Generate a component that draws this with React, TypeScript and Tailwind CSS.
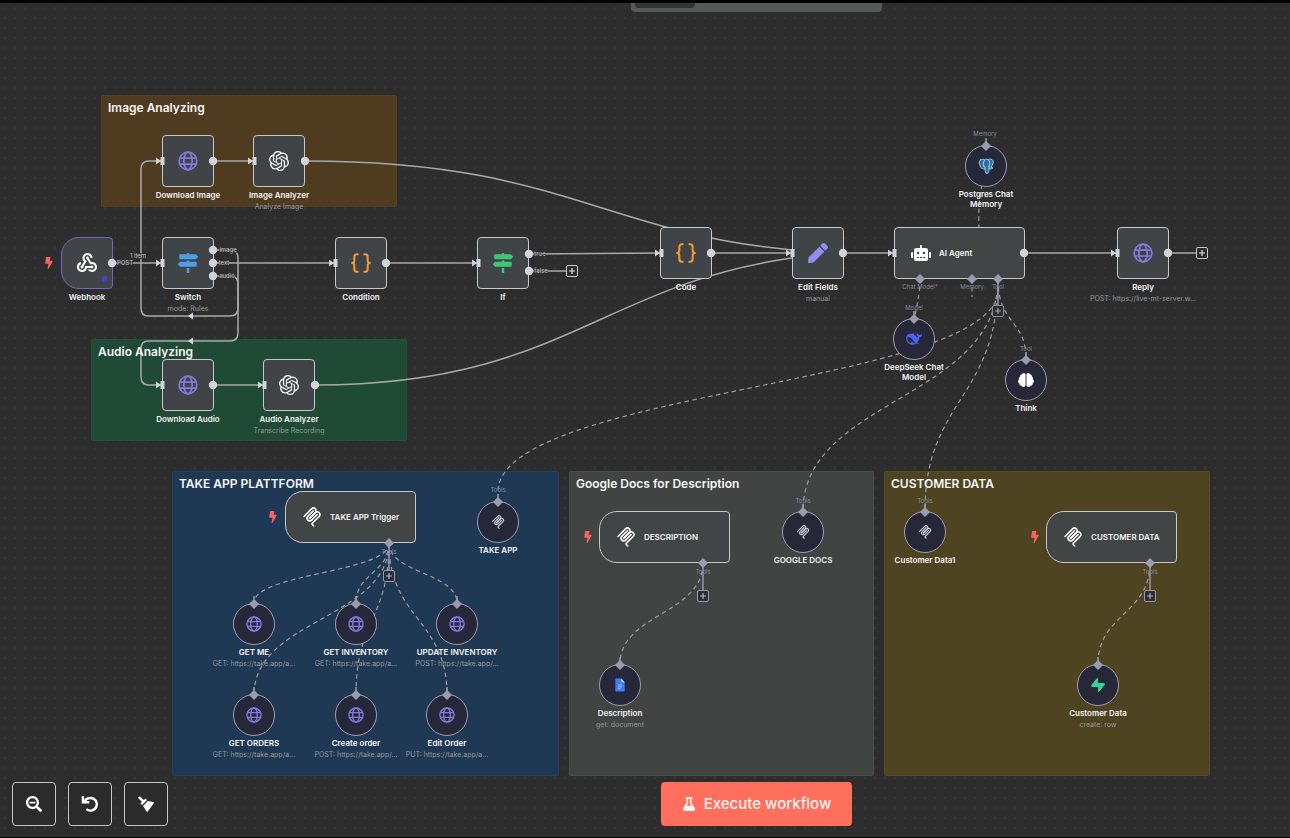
import type { CSSProperties, ReactNode } from 'react';
import { FaBolt, FaBrain, FaFlask, FaMapSigns, FaPen, FaRobot, FaSearchMinus } from 'react-icons/fa';
import { MdWebhook } from 'react-icons/md';
import { SiOpenai, SiSupabase } from 'react-icons/si';

/* ---------- icons ---------- */

function Globe({ className }: { className: string }) {
  return (
    <svg viewBox="0 0 24 24" fill="none" stroke="currentColor" strokeWidth="2.1" className={className} aria-hidden="true">
      <circle cx="12" cy="12" r="10.6" />
      <ellipse cx="12" cy="12" rx="5" ry="10.6" />
      <path d="M2.2 8.4h19.6M2.2 15.6h19.6" />
    </svg>
  );
}

function Mcp({ className }: { className: string }) {
  return (
    <svg viewBox="0 0 180 180" fill="none" stroke="currentColor" strokeWidth="14" strokeLinecap="round" className={className} aria-hidden="true">
      <path d="M18 84.85L85.88 16.97C95.25 7.6 110.45 7.6 119.82 16.97C129.2 26.34 129.2 41.54 119.82 50.91L68.56 102.18" />
      <path d="M69.27 101.47L119.82 50.91C129.2 41.54 144.39 41.54 153.77 50.91L154.12 51.27C163.49 60.64 163.49 75.83 154.12 85.21L92.72 146.6C89.6 149.72 89.6 154.79 92.72 157.91L105.33 170.52" />
      <path d="M102.85 33.94L52.65 84.15C43.28 93.52 43.28 108.71 52.65 118.09C62.02 127.46 77.22 127.46 86.59 118.09L136.79 67.88" />
    </svg>
  );
}

function Braces({ className }: { className: string }) {
  return (
    <svg viewBox="0 0 24 24" fill="none" stroke="currentColor" strokeWidth="2.4" strokeLinecap="round" strokeLinejoin="round" className={className} aria-hidden="true">
      <path d="M8 1.5H7a3 3 0 0 0-3 3v4.2c0 2-1 3.3-2.7 3.3C3 12 4 13.3 4 15.3v4.2a3 3 0 0 0 3 3h1" />
      <path d="M16 1.5h1a3 3 0 0 1 3 3v4.2c0 2 1 3.3 2.7 3.3-1.7 0-2.7 1.3-2.7 3.3v4.2a3 3 0 0 1-3 3h-1" />
    </svg>
  );
}

function Elephant({ className }: { className: string }) {
  return (
    <svg viewBox="0 0 24 24" strokeLinejoin="round" strokeLinecap="round" className={className} aria-hidden="true">
      <path
        d="M3.5 3C6 1.3 8.5 2 10 2.6C12 1.6 14 1.8 15.5 2.3C18 1 21 1.6 22.5 4C23.5 7 21.5 11 19.5 14C20.5 14.5 22 14.2 22.5 14.8C21.5 16.6 18 16.8 16.5 16C16.3 18.5 16.5 23 13.5 23C11 23 10.8 20 10.6 16.5C9.5 17 8 17 7 15.5C5 17 3.5 13 2.3 9.5C1.5 6.5 1.6 4.3 3.5 3Z"
        fill="#336f9e"
        stroke="#8fcdf0"
        strokeWidth="1.5"
      />
      <path d="M10 3C8 5 7.5 9 8.5 12M15.5 2.5C18 5 18.5 9 16.5 12.5M10.6 16C11 14 10.5 12 8.5 12M16.5 16V12.5" fill="none" stroke="#9fd6f4" strokeWidth="1.5" />
    </svg>
  );
}

function DeepSeek({ className }: { className: string }) {
  return (
    <svg viewBox="0 0 24 24" fill="currentColor" fillRule="evenodd" className={className} aria-hidden="true">
      <path d="M23.748 4.482c-.254-.124-.364.113-.512.234-.051.039-.094.09-.137.136-.372.397-.806.657-1.373.626-.829-.046-1.537.214-2.163.848-.133-.782-.575-1.248-1.247-1.548-.352-.156-.708-.311-.955-.65-.172-.241-.219-.51-.305-.774-.055-.16-.11-.323-.293-.35-.2-.031-.278.136-.356.276-.313.572-.434 1.202-.422 1.84.027 1.436.633 2.58 1.838 3.393.137.093.172.187.129.323-.082.28-.18.552-.266.833-.055.179-.137.217-.329.14a5.526 5.526 0 0 1-1.736-1.18c-.857-.828-1.631-1.742-2.597-2.458a11.365 11.365 0 0 0-.689-.471c-.985-.957.13-1.743.388-1.836.27-.098.093-.432-.779-.428-.872.004-1.67.295-2.687.684a3.055 3.055 0 0 1-.465.137 9.597 9.597 0 0 0-2.883-.102c-1.885.21-3.39 1.102-4.497 2.623C.082 8.606-.231 10.684.152 12.85c.403 2.284 1.569 4.175 3.36 5.653 1.858 1.533 3.997 2.284 6.438 2.14 1.482-.085 3.133-.284 4.994-1.86.47.234.962.327 1.78.397.63.059 1.236-.03 1.705-.128.735-.156.684-.837.419-.961-2.155-1.004-1.682-.595-2.113-.926 1.096-1.296 2.746-2.642 3.392-7.003.05-.347.007-.565 0-.845-.004-.17.035-.237.23-.256a4.173 4.173 0 0 0 1.545-.475c1.396-.763 1.96-2.015 2.093-3.517.02-.23-.004-.467-.247-.588zM11.581 18c-2.089-1.642-3.102-2.183-3.52-2.16-.392.024-.321.471-.235.763.09.288.207.486.371.739.114.167.192.416-.113.603-.673.416-1.842-.14-1.897-.167-1.361-.802-2.5-1.86-3.301-3.307-.774-1.393-1.224-2.887-1.298-4.482-.02-.386.093-.522.477-.592a4.696 4.696 0 0 1 1.529-.039c2.132.312 3.946 1.265 5.468 2.774.868.86 1.525 1.887 2.202 2.891.72 1.066 1.494 2.082 2.48 2.914.348.292.625.514.891.677-.802.09-2.14.11-3.054-.614z" />
    </svg>
  );
}

function DocFile({ className }: { className: string }) {
  return (
    <svg viewBox="0 0 24 30" className={className} aria-hidden="true">
      <path d="M2 1h13l7 8v20H2z" fill="#3f7cf0" />
      <path d="M15 1v8h7z" fill="#b9d2ff" />
      <path d="M8 15h8M8 19h8M8 23h5" stroke="#a5c4fb" strokeWidth="2" />
    </svg>
  );
}

function UndoArrow({ className }: { className: string }) {
  return (
    <svg viewBox="0 0 24 24" fill="none" stroke="currentColor" strokeWidth="3.2" className={className} aria-hidden="true">
      <path d="M2.6 1.5v8.1h8.4" />
      <path d="M4 9C6 6 9.2 4 12.800 4a8.400 8.400 0 1 1-5.600 14.800" />
    </svg>
  );
}

function Brush({ className }: { className: string }) {
  return (
    <svg viewBox="0 0 24 24" fill="currentColor" className={className} aria-hidden="true">
      <path d="M1.2 3.8L3.6 1.6L9 6.5L11.2 4.6L13.4 6.8L6.8 13.4L4.6 11.2L6.5 9z" />
      <path d="M14.5 8L23 9.5L20.5 13.5L13.5 23L8 14.5z" />
    </svg>
  );
}

/* ---------- canvas data ---------- */

type Sticky = { title: string; x: number; y: number; w: number; h: number; tone: string };

const stickies: Sticky[] = [
  { title: 'Image Analyzing', x: 101, y: 92, w: 296, h: 112, tone: 'bg-[#4f3b20] border-[#574020]' },
  { title: 'Audio Analyzing', x: 91, y: 336, w: 316, h: 102, tone: 'bg-[#1f4a35] border-[#235039]' },
  { title: 'TAKE APP PLATTFORM', x: 172, y: 468, w: 387, h: 305, tone: 'bg-[#1f3955] border-[#213f61]' },
  { title: 'Google Docs for Description', x: 569, y: 468, w: 305, h: 305, tone: 'bg-[#404443] border-[#484c4b]' },
  { title: 'CUSTOMER DATA', x: 884, y: 468, w: 326, h: 305, tone: 'bg-[#4f4422] border-[#564a20]' },
];

type NodeData = { x: number; y: number; label: string; sub?: string; icon: ReactNode; shape?: string };

const globe = <Globe className="size-5 text-[#8379dc]" />;
const smallGlobe = <Globe className="size-4 text-[#8379dc]" />;
const smallMcp = <Mcp className="size-[14px] text-[#d6d6de]" />;
const mcp = <Mcp className="size-5 text-white" />;
const openai = <SiOpenai className="size-5 text-white" />;
const braces = <Braces className="size-5 text-[#f59b2c]" />;

const plain = 'rounded-sm border-[#c6c9c7]';
const trigger = 'rounded-l-[18px] rounded-r-sm border-[#c6c9c7]';

const squares: NodeData[] = [
  { x: 188, y: 158, label: 'Download Image', icon: globe },
  { x: 279, y: 158, label: 'Image Analyzer', sub: 'Analyze Image', icon: openai },
  { x: 87, y: 260, label: 'Webhook', icon: <MdWebhook className="size-6 text-white" />, shape: 'rounded-l-[18px] rounded-r-sm border-[#7169c0]' },
  { x: 188, y: 260, label: 'Switch', sub: 'mode: Rules', icon: <FaMapSigns className="size-5 text-[#4c9ee8]" /> },
  { x: 361, y: 260, label: 'Condition', icon: braces },
  { x: 503, y: 260, label: 'If', icon: <FaMapSigns className="size-5 text-[#3ec777]" /> },
  { x: 686, y: 250, label: 'Code', icon: braces },
  { x: 818, y: 250, label: 'Edit Fields', sub: 'manual', icon: <FaPen className="size-5 text-[#908ff0]" /> },
  { x: 1143, y: 250, label: 'Reply', sub: 'POST: https://live-mt-server.w...', icon: globe },
  { x: 188, y: 382, label: 'Download Audio', icon: globe },
  { x: 289, y: 382, label: 'Audio Analyzer', sub: 'Transcribe Recording', icon: openai },
];

const wides: NodeData[] = [
  { x: 959, y: 250, label: 'AI Agent', icon: <FaRobot className="size-5 text-white" />, shape: plain },
  { x: 350, y: 514, label: 'TAKE APP Trigger', icon: mcp, shape: trigger },
  { x: 664, y: 534, label: 'DESCRIPTION', icon: mcp, shape: trigger },
  { x: 1111, y: 534, label: 'CUSTOMER DATA', icon: mcp, shape: trigger },
];

const circles: NodeData[] = [
  { x: 986, y: 163, label: 'Postgres Chat\nMemory', icon: <Elephant className="size-4" /> },
  { x: 914, y: 336, label: 'DeepSeek Chat\nModel', icon: <DeepSeek className="size-4 text-[#4d62f2]" /> },
  { x: 1026, y: 377, label: 'Think', icon: <FaBrain className="size-4 text-white" /> },
  { x: 498, y: 519, label: 'TAKE APP', icon: smallMcp },
  { x: 803, y: 529, label: 'GOOGLE DOCS', icon: smallMcp },
  { x: 925, y: 529, label: 'Customer Data1', icon: smallMcp },
  { x: 254, y: 621, label: 'GET ME', sub: 'GET: https://take.app/a...', icon: smallGlobe },
  { x: 356, y: 621, label: 'GET INVENTORY', sub: 'GET: https://take.app/a...', icon: smallGlobe },
  { x: 457, y: 621, label: 'UPDATE INVENTORY', sub: 'POST: https://take.app/...', icon: smallGlobe },
  { x: 254, y: 712, label: 'GET ORDERS', sub: 'GET: https://take.app/a...', icon: smallGlobe },
  { x: 356, y: 712, label: 'Create order', sub: 'POST: https://take.app/...', icon: smallGlobe },
  { x: 447, y: 712, label: 'Edit Order', sub: 'PUT: https://take.app/a...', icon: smallGlobe },
  { x: 620, y: 682, label: 'Description', sub: 'get: document', icon: <DocFile className="h-[14px] w-3" /> },
  { x: 1098, y: 682, label: 'Customer Data', sub: 'create: row', icon: <SiSupabase className="size-[14px] text-[#35d399]" /> },
];

const solidEdges = [
  'M213 158H254',
  'M112 260H162',
  'M213 260H335',
  'M386 260H478',
  'M529 251L661 250',
  'M529 268H567',
  'M711 250H792',
  'M843 250H894',
  'M1024 250H1117',
  'M1168 250H1197',
  'M213 382H264',
  'M305 158C560 158 600 229 792 247',
  'M315 382C560 382 600 282 792 255',
  'M213 247H230Q238 247 238 255V305Q238 313 230 313H148Q141 313 141 305V166Q141 158 149 158H162',
  'M213 273H230Q238 273 238 281V330Q238 338 230 338H148Q141 338 141 346V374Q141 382 149 382H162',
];

const dashedEdges = [
  'M972 276V294M982 182Q978 200 979 226',
  'M920 276Q920 292 914 316',
  'M998 276C998 322 1026 316 1026 356',
  'M998 290C985 382 505 388 498 487',
  'M998 276C998 396 803 396 803 508',
  'M998 276C998 396 925 396 925 508',
  'M389 540C389 570 254 570 254 600',
  'M389 540C389 570 356 570 356 600',
  'M389 540C389 570 457 570 457 600',
  'M389 540C389 616 254 616 254 692',
  'M389 540C389 616 356 616 356 692',
  'M389 540C389 616 447 616 447 692',
  'M703 560C703 611 620 611 620 661',
  'M1150 560C1150 611 1098 611 1098 661',
];

const stems = ['M389 540V568', 'M703 560V588', 'M1150 560V588', 'M998 276V304'];

const outputs = [
  [213, 158], [305, 158], [112, 260], [213, 247], [213, 260], [213, 273], [386, 260], [529, 251], [529, 268],
  [711, 250], [843, 250], [1024, 250], [1168, 250], [213, 382], [315, 382],
];

const inputs = [
  [162, 158], [254, 158], [162, 260], [335, 260], [478, 260], [661, 250], [792, 250], [894, 250], [1117, 250],
  [162, 382], [264, 382],
];

const diamonds = [
  [986, 143], [914, 316], [1026, 357], [498, 499], [803, 509], [925, 509], [254, 601], [356, 601], [457, 601],
  [254, 692], [356, 692], [447, 692], [620, 662], [1098, 662], [920, 276], [972, 276], [998, 276], [389, 540],
  [703, 560], [1150, 560],
];

const portLabels: { x: number; y: number; text: string; required?: boolean; over?: boolean }[] = [
  { x: 985, y: 131, text: 'Memory' },
  { x: 920, y: 284, text: 'Chat Model', required: true },
  { x: 972, y: 284, text: 'Memory' },
  { x: 998, y: 284, text: 'Tool' },
  { x: 914, y: 305, text: 'Model' },
  { x: 1026, y: 346, text: 'Tool' },
  { x: 498, y: 487, text: 'Tools' },
  { x: 803, y: 498, text: 'Tools' },
  { x: 925, y: 498, text: 'Tools' },
  { x: 389, y: 549, text: 'Tools' },
  { x: 703, y: 569, text: 'Tools' },
  { x: 1150, y: 569, text: 'Tools' },
  { x: 125, y: 260, text: 'POST', over: true },
  { x: 138, y: 253, text: '1 item', over: true },
  { x: 228, y: 247, text: 'image', over: true },
  { x: 224, y: 260, text: 'text', over: true },
  { x: 227, y: 273, text: 'audio', over: true },
  { x: 540, y: 251, text: 'true', over: true },
  { x: 541, y: 268, text: 'false', over: true },
];

const plusButtons = [
  { x: 572, y: 268, name: 'Add node after If', tone: 'border-[#c9c9cc] bg-[#2d2d2e] text-[#e4e4e7]' },
  { x: 1202, y: 250, name: 'Add node after Reply', tone: 'border-[#c9c9cc] bg-[#2d2d2e] text-[#e4e4e7]' },
  { x: 998, y: 308, name: 'Add tool to AI Agent', tone: 'border-[#8c8d9b] bg-[#2d2d2e] text-[#a3a4b2]' },
  { x: 389, y: 573, name: 'Add tool to TAKE APP Trigger', tone: 'border-[#9a9ba8] bg-[#2b2c36] text-[#b3b4c0]' },
  { x: 703, y: 593, name: 'Add tool to DESCRIPTION', tone: 'border-[#9a9ba8] bg-[#2b2c36] text-[#b3b4c0]' },
  { x: 1150, y: 593, name: 'Add tool to CUSTOMER DATA', tone: 'border-[#9a9ba8] bg-[#2b2c36] text-[#b3b4c0]' },
];

const triggers = [[49, 260], [273, 514], [588, 534], [1035, 534]];

const at = (x: number, y: number): CSSProperties => ({ left: x, top: y });

/* ---------- canvas parts ---------- */

function Caption({ label, sub }: { label: string; sub?: string }) {
  return (
    <figcaption className="flex w-0 flex-col items-center text-center">
      <span className="whitespace-pre text-[8px] leading-[10px] font-semibold text-[#f4f4f5]">{label}</span>
      {sub && <span className="whitespace-pre pt-[2px] text-[7px] leading-[10px] text-[#96989b]">{sub}</span>}
    </figcaption>
  );
}

function SquareNode({ x, y, label, sub, icon, shape = plain }: NodeData) {
  return (
    <figure style={at(x - 26, y - 26)} className="absolute flex w-[52px] flex-col items-center gap-[3px]">
      <div className={`flex size-[52px] items-center justify-center border bg-[#404446] ${shape}`}>{icon}</div>
      <Caption label={label} sub={sub} />
    </figure>
  );
}

function WideNode({ x, y, label, icon, shape }: NodeData) {
  return (
    <div
      style={at(x - 65, y - 26)}
      className={`absolute flex h-[52px] w-[131px] items-center gap-2 border bg-[#414545] pl-4 text-[8px] font-semibold whitespace-nowrap text-[#f4f4f5] ${shape}`}
    >
      {icon}
      <span>{label}</span>
    </div>
  );
}

function CircleNode({ x, y, label, sub, icon }: NodeData) {
  return (
    <figure style={at(x - 21, y - 21)} className="absolute flex w-[42px] flex-col items-center gap-[2px]">
      <div className="flex size-[42px] items-center justify-center rounded-full border border-[#9d9eac] bg-[#262839]">{icon}</div>
      <Caption label={label} sub={sub} />
    </figure>
  );
}

function Edges() {
  return (
    <svg className="pointer-events-none absolute top-0 left-0 h-[834px] w-[1290px]" viewBox="0 0 1290 834" fill="none" aria-hidden="true">
      <g stroke="#a8a9a9" strokeWidth="1.5">
        {solidEdges.map((d) => (
          <path key={d} d={d} />
        ))}
      </g>
      <g stroke="#9a9ca0" strokeWidth="1.2" strokeDasharray="4.5 3.5">
        {dashedEdges.map((d) => (
          <path key={d} d={d} />
        ))}
      </g>
      <g stroke="#9092a3" strokeWidth="1.6">
        {stems.map((d) => (
          <path key={d} d={d} />
        ))}
      </g>
      <path d="M188 313L193 309.5V316.5ZM188 338L193 334.5V341.5Z" fill="#d7d7da" />
    </svg>
  );
}

function Ports() {
  return (
    <svg className="pointer-events-none absolute top-0 left-0 h-[834px] w-[1290px]" viewBox="0 0 1290 834" aria-hidden="true">
      <g fill="#d3d4d8">
        {outputs.map(([x, y]) => (
          <circle key={`${x}-${y}`} cx={x} cy={y} r="4.2" />
        ))}
        {inputs.map(([x, y]) => (
          <path key={`${x}-${y}`} d={`M${x - 1.5} ${y - 4}h4v8h-4zM${x - 6} ${y - 3.5}l5 3.5l-5 3.5z`} />
        ))}
      </g>
      <g fill="#9a9bae">
        {diamonds.map(([x, y]) => (
          <path key={`${x}-${y}`} d={`M${x} ${y - 5}l5 5l-5 5l-5-5z`} />
        ))}
        {diamonds.slice(0, 14).map(([x, y]) => (
          <path key={`s${x}-${y}`} d={`M${x - 0.75} ${y - 8}h1.5v6h-1.5z`} />
        ))}
      </g>
      <ellipse cx="104.5" cy="276" rx="2.5" ry="3.2" fill="#4a41c9" />
    </svg>
  );
}

/* ---------- page ---------- */

const controls = [
  { name: 'Zoom out', icon: <FaSearchMinus className="size-4" /> },
  { name: 'Reset zoom', icon: <UndoArrow className="size-[18px]" /> },
  { name: 'Tidy up workflow', icon: <Brush className="size-[18px]" /> },
];

export default function App() {
  return (
    <div className="flex min-h-screen flex-col border-t-[3px] border-b border-black bg-[#2d2d2e] font-['Inter',sans-serif]">
      <main className="relative min-h-[834px] flex-1 overflow-hidden bg-[radial-gradient(circle,#353536_1px,transparent_1px)] bg-size-[10px_10px]">
        <div className="flex justify-end pr-[408px]">
          <div className="h-[9px] w-[251px] rounded-b-sm bg-[#555a59] px-1">
            <div className="h-[5px] w-[60px] rounded-b-sm bg-[#333535]" />
          </div>
        </div>

        {stickies.map((s) => (
          <section
            key={s.title}
            aria-label={s.title}
            style={{ left: s.x, top: s.y, width: s.w, height: s.h }}
            className={`absolute rounded-xs border ${s.tone}`}
          />
        ))}
        <Edges />
        {stickies.map((s) => (
          <h2 key={s.title} style={at(s.x + 7, s.y + 5)} className="absolute text-[12px] leading-4 font-semibold whitespace-nowrap text-[#f6f6f6]">
            {s.title}
          </h2>
        ))}

        {squares.map((n) => (
          <SquareNode key={n.label} {...n} />
        ))}
        {wides.map((n) => (
          <WideNode key={n.label} {...n} />
        ))}
        {circles.map((n) => (
          <CircleNode key={`${n.x}-${n.y}`} {...n} />
        ))}
        <Ports />

        {portLabels.map((p) => (
          <div key={`${p.x}-${p.y}`} style={at(p.x, p.y)} className="absolute flex size-0 items-center justify-center">
            <span className={`text-[6px] leading-[6px] whitespace-nowrap ${p.over ? 'bg-[#2d2d2e]/70 text-[#c4c4c8]' : 'text-[#8a8b9b]'}`}>
              {p.text}
              {p.required && <span className="text-[#f0526a]">*</span>}
            </span>
          </div>
        ))}

        {triggers.map(([x, y]) => (
          <FaBolt key={x} style={at(x - 5, y - 6)} className="absolute h-3 w-[10px] text-[#fb6262]" aria-hidden="true" />
        ))}

        {plusButtons.map((b) => (
          <button
            key={b.name}
            type="button"
            aria-label={b.name}
            style={at(b.x - 6, b.y - 6)}
            className={`absolute flex size-3 items-center justify-center rounded-xs border ${b.tone}`}
          >
            <svg viewBox="0 0 6 6" className="size-[6px]" stroke="currentColor" strokeWidth="1.2" aria-hidden="true">
              <path d="M3 0v6M0 3h6" />
            </svg>
          </button>
        ))}

        <div className="absolute inset-x-0 bottom-[11px] grid grid-cols-[1fr_auto_438px] items-center pl-3">
          <div className="flex gap-3">
            {controls.map((c) => (
              <button
                key={c.name}
                type="button"
                aria-label={c.name}
                className="flex size-11 items-center justify-center rounded-sm border border-[#c6c6c6] bg-[#2b2b2c] text-white"
              >
                {c.icon}
              </button>
            ))}
          </div>
          <button
            type="button"
            className="flex h-11 w-[191px] items-center justify-center gap-2 rounded-sm bg-[#ff6f5e] text-[15px] font-medium text-[#fff4f0]"
          >
            <FaFlask className="size-[14px]" aria-hidden="true" />
            Execute workflow
          </button>
        </div>
      </main>
    </div>
  );
}
